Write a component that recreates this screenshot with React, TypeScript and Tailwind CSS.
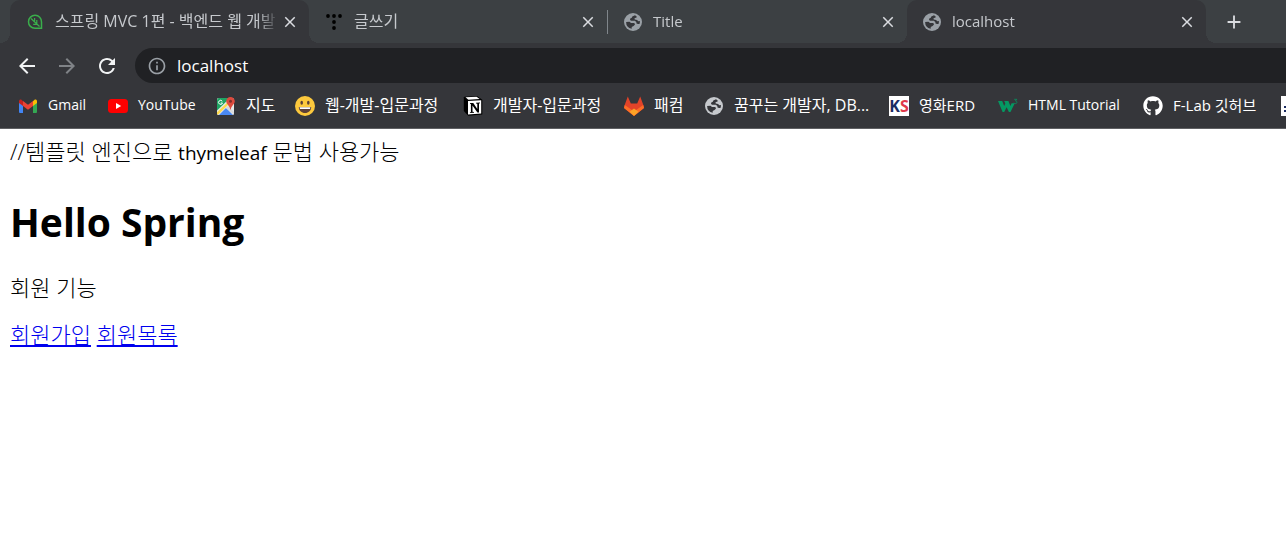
import type { ReactNode } from "react";
import { MdAdd, MdArrowBack, MdArrowForward, MdClose, MdInfoOutline, MdRefresh } from "react-icons/md";
import { FaGithub } from "react-icons/fa";

function GlobeIcon({ className }: { className: string }) {
  return (
    <svg viewBox="0 0 18 18" className={className} aria-hidden="true">
      <circle cx="9" cy="9" r="9" fill="currentColor" />
      <path
        d="M11 2.300 8.300 3.500 7.800 4.800 6.300 5.500 6 6.900l1.200.9h3.600l1.500 1.300.2 1.300 1.500.5h1.500A7 7 0 0 0 15.900 8l-1.600.2-1.200-1.200-2.400-.4-.1-1.500 1.800-.4.300-1.200ZM2.100 9a7 7 0 0 0 5.600 6.800v-1.900l1.900-.9 1.400-1.500-.7-1.500H7L5.500 8.800Z"
        fill="#35363a"
      />
    </svg>
  );
}

function LeafIcon() {
  return (
    <svg viewBox="0 0 16 16" className="size-4" fill="none" stroke="#3aae4b" strokeWidth="1.5" aria-hidden="true">
      <path d="M14.500 14.300H8A6.500 6.500 0 1 1 14.500 8Z" />
      <path d="M4 4.500 12.500 12.500M7.600 4v4M9.800 6v4.300H6.200" strokeWidth="1.200" />
    </svg>
  );
}

function DotsIcon() {
  return (
    <svg viewBox="0 0 16 16" className="size-4" fill="#000" aria-hidden="true">
      <circle cx="2" cy="2" r="1.900" />
      <circle cx="8" cy="2" r="1.900" />
      <circle cx="14" cy="2" r="1.900" />
      <circle cx="8" cy="8" r="1.900" />
      <circle cx="8" cy="14" r="1.900" />
    </svg>
  );
}

function GmailIcon() {
  return (
    <svg viewBox="0 0 20 20" className="size-5" aria-hidden="true">
      <path d="M1 6v9.700c0 .8.500 1.300 1.300 1.300H5V9Z" fill="#4285f4" />
      <path d="M19 6v9.700c0 .8-.5 1.300-1.300 1.300H15V9Z" fill="#34a853" />
      <path d="M15 5.200 16.300 4C17.500 3.100 19 3.900 19 5.300V7l-4 3Z" fill="#fbbc04" />
      <path d="M5 5.200 3.700 4C2.500 3.100 1 3.900 1 5.300V7l4 3Z" fill="#c5221f" />
      <path d="M5 5v5l5 3.800 5-3.800V5l-5 3.800Z" fill="#ea4335" />
    </svg>
  );
}

function YouTubeIcon() {
  return (
    <svg viewBox="0 0 20 20" className="size-5" aria-hidden="true">
      <rect y="3" width="20" height="14" rx="3.500" fill="#f00" />
      <path d="M8 7v6l5.200-3Z" fill="#fff" />
    </svg>
  );
}

function MapsIcon() {
  return (
    <svg viewBox="0 0 20 20" className="size-5" aria-hidden="true">
      <rect x="1" y="2" width="17" height="17" rx="1.500" fill="#e8e8e8" />
      <path d="M2.500 2H14L1 14.500v-11Z" fill="#1fa463" />
      <path d="M1 16.300 14 4l1.500 1.500L2 18.700 1 18Z" fill="#fdd94c" />
      <path d="M3 19 10 12l7 7Z" fill="#4a89f3" />
      <path d="m10 12 2-2 6 6v2.500Z" fill="#dadada" />
      <path d="M14.500 1a4.300 4.300 0 0 1 4.300 4.300c0 3-3.600 4.200-4 8.200h-.6c-.4-4-4-5.200-4-8.200A4.300 4.300 0 0 1 14.500 1Z" fill="#dd4b3e" />
      <circle cx="14.500" cy="5.300" r="1.500" fill="#822f2b" />
      <path d="M6.300 5.300A2 2 0 1 0 6.500 7H4.800" fill="none" stroke="#fff" />
    </svg>
  );
}

function SmileIcon() {
  return (
    <svg viewBox="0 0 20 20" className="size-5" aria-hidden="true">
      <circle cx="10" cy="10" r="10" fill="#fdc93d" />
      <ellipse cx="6.700" cy="6.700" rx="1.300" ry="2" fill="#5d4037" />
      <ellipse cx="13.300" cy="6.700" rx="1.300" ry="2" fill="#5d4037" />
      <path d="M3.800 11h12.400c0 3.500-2.700 6-6.200 6s-6.200-2.500-6.200-6Z" fill="#5d4037" />
      <path d="M4.600 11.300h10.800l-.4 1.700H5Z" fill="#fff" />
    </svg>
  );
}

function NotionIcon() {
  return (
    <svg viewBox="0 0 20 20" className="size-5" aria-hidden="true">
      <path d="M1.500.7 14 0l5.300 3.800V18.600L5.200 19.700 0.800 15V1.500Z" fill="#000" />
      <path d="M2.500 1.300 13.600.8l3 2.200-11.200.7Z" fill="#fff" />
      <path d="m5 5 13.200-.7v13.300L5 18.500Z" fill="#fff" />
      <path d="M7 7h3.300l4 6V7.700L13 7.400v-.6l4-.2v.6l-1 .4v9h-1.600L9.500 9.500v6.300l1.500.3v.6l-4.100.3v-.6l1-.5V8L7 7.700Z" fill="#000" />
    </svg>
  );
}

function GitLabIcon() {
  return (
    <svg viewBox="0 0 20 20" className="size-5" aria-hidden="true">
      <path d="M3.800.500.500 9.500 0 12l10 8 10-8-.5-2.500-3.300-9-3 7H6.800Z" fill="#e24329" />
      <path d="M.8 9 10 15.500 19.200 9 20 12l-10 8L0 12Z" fill="#fc6d26" />
      <path d="m5.500 15.800 4.500-3.300 4.500 3.300L10 19.800Z" fill="#fca326" />
    </svg>
  );
}

function KsIcon() {
  return (
    <span className="flex size-5 items-center justify-center bg-white font-['Open_Sans',sans-serif] text-base leading-5 font-bold" aria-hidden="true">
      <span className="text-[#1b2c63]">K</span>
      <span className="text-[#e03a4b]">S</span>
    </span>
  );
}

function W3Icon() {
  return (
    <svg viewBox="0 0 20 20" className="size-5" aria-hidden="true">
      <path d="M0 5h4.200l2 5 1.100-2.500L6.200 5h4.200l2 5 1.200-2.700h3.200L12.500 16h-1.600L8.600 11.200 6.200 16H4.600Z" fill="#059862" />
      <path d="M16.200 3.300h2.600l-1.300 1.600c2 .2 1.800 2.700 0 2.700-.8 0-1.200-.3-1.500-.8" fill="none" stroke="#059862" strokeWidth=".8" />
    </svg>
  );
}

function DocumentIcon() {
  return (
    <svg viewBox="0 0 20 20" className="size-5" aria-hidden="true">
      <path d="M0 0h20v20H0Z" fill="#fff" />
      <path d="M3 11h14M3 15h14" stroke="#1b2c63" strokeWidth="2" />
    </svg>
  );
}

type TabProps = { icon: ReactNode; title: string; size?: string; lit?: boolean; divider?: boolean };

function Tab({ icon, title, size = "text-[15px]", lit = false, divider = false }: TabProps) {
  const flare =
    "before:absolute before:bottom-0 before:-left-2.5 before:size-2.5 before:bg-[radial-gradient(circle_at_0_0,transparent_10px,#35363a_10px)] after:absolute after:-right-2.5 after:bottom-0 after:size-2.5 after:bg-[radial-gradient(circle_at_100%_0,transparent_10px,#35363a_10px)]";
  return (
    <div className={`relative flex h-full min-w-0 flex-[0_1_299px] items-center ${lit ? `rounded-t-[10px] bg-[#35363a] ${flare}` : ""}`}>
      <button type="button" className="flex min-w-0 flex-1 items-center gap-[11px] pl-4 text-left">
        <span className="flex w-[18px] shrink-0 justify-center">{icon}</span>
        <span className={`min-w-0 flex-1 overflow-hidden mask-r-from-90% mask-r-to-100% pb-0.5 leading-6 whitespace-nowrap text-[#c6c9cd] ${size}`}>
          {title}
        </span>
      </button>
      <button type="button" aria-label={`Close ${title}`} className="mr-2.5 ml-0.5 flex size-[18px] shrink-0 items-center justify-center text-[#dadce0]">
        <MdClose className="size-[18px]" />
      </button>
      {divider && <span className="h-6 w-px shrink-0 bg-[#80868b]" />}
    </div>
  );
}

const bookmarks: { label: string; icon: ReactNode; layout: string }[] = [
  { label: "Gmail", icon: <GmailIcon />, layout: "w-[90px] text-sm" },
  { label: "YouTube", icon: <YouTubeIcon />, layout: "w-[108px] text-sm" },
  { label: "지도", icon: <MapsIcon />, layout: "w-[79px] text-base" },
  { label: "웹-개발-입문과정", icon: <SmileIcon />, layout: "w-[168px] text-base" },
  { label: "개발자-입문과정", icon: <NotionIcon />, layout: "w-[161px] text-base" },
  { label: "패컴", icon: <GitLabIcon />, layout: "w-[80px] text-base" },
  { label: "꿈꾸는 개발자, DB...", icon: <GlobeIcon className="size-[18px] text-[#c6c9cd]" />, layout: "w-[185px] text-base" },
  { label: "영화ERD", icon: <KsIcon />, layout: "w-[109px] text-[15px]" },
  { label: "HTML Tutorial", icon: <W3Icon />, layout: "w-[145px] text-sm" },
  { label: "F-Lab 깃허브", icon: <FaGithub className="size-5 text-white" />, layout: "w-[138px] text-[15px]" },
  { label: "", icon: <DocumentIcon />, layout: "w-5" },
];

export default function App() {
  return (
    <div className="min-h-screen overflow-hidden bg-white font-['Open_Sans','Noto_Sans_CJK_KR',sans-serif]">
      <header className="border-b border-[#5f6063] bg-[#35363a]">
        <div className="flex h-[43px] items-center bg-[#3c4043] pl-2.5">
          <Tab icon={<LeafIcon />} title="스프링 MVC 1편 - 백엔드 웹 개발" size="text-base" lit />
          <Tab icon={<DotsIcon />} title="글쓰기" size="text-base" divider />
          <Tab icon={<GlobeIcon className="size-[18px] text-[#9aa0a6]" />} title="Title" />
          <Tab icon={<GlobeIcon className="size-[18px] text-[#9aa0a6]" />} title="localhost" lit />
          <button type="button" aria-label="New tab" className="ml-4 flex size-6 items-center justify-center text-[#dadce0]">
            <MdAdd className="size-[22px]" />
          </button>
        </div>

        <div className="flex items-center pt-[5px] pl-[15px]">
          <button type="button" aria-label="Back" className="mr-4 size-6 text-[#f1f3f4]">
            <MdArrowBack className="size-6" />
          </button>
          <button type="button" aria-label="Forward" className="mr-4 size-6 text-[#808387]">
            <MdArrowForward className="size-6" />
          </button>
          <button type="button" aria-label="Reload" className="mr-4 size-6 text-[#f1f3f4]">
            <MdRefresh className="size-6" />
          </button>
          <label className="flex h-[35px] flex-1 items-center gap-2.5 rounded-l-full bg-[#202124] pl-3">
            <MdInfoOutline className="size-5 text-[#9aa0a6]" aria-hidden="true" />
            <input
              type="text"
              aria-label="Address"
              defaultValue="localhost"
              className="h-full min-w-0 flex-1 bg-transparent text-[17px] text-white outline-none"
            />
          </label>
        </div>

        <nav aria-label="Bookmarks" className="flex h-[45px] items-center overflow-hidden pl-[18px]">
          {bookmarks.map(({ label, icon, layout }) => (
            <a
              key={label || "more"}
              href="#"
              aria-label={label || "Bookmark"}
              className={`flex shrink-0 items-center gap-2.5 leading-6 whitespace-nowrap text-white ${layout}`}
            >
              <span className="flex w-5 shrink-0 justify-center">{icon}</span>
              {label && <span className="pb-0.5">{label}</span>}
            </a>
          ))}
        </nav>
      </header>

      <main className="px-2.5 pt-2 text-[22px] leading-7 font-light text-black">
        //템플릿 엔진으로 <span className="text-[19px] font-normal">thymeleaf</span> 문법 사용가능
        <h1 className="mt-7 text-[39px] leading-[54px] font-bold">Hello Spring</h1>
        <p className="mt-6">회원 기능</p>
        <p className="mt-[19px]">
          <a href="#" className="text-[#0000ee] underline">회원가입</a>{" "}
          <a href="#" className="text-[#0000ee] underline">회원목록</a>
        </p>
      </main>
    </div>
  );
}
